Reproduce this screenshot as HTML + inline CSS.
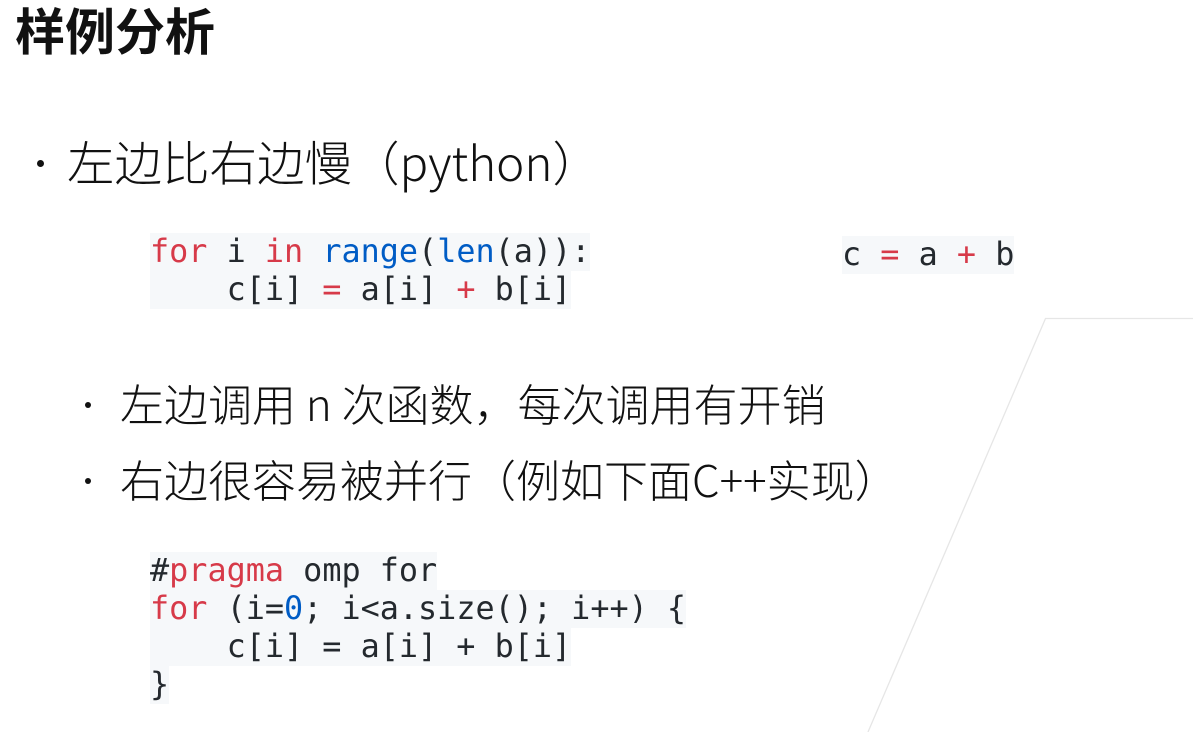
<!DOCTYPE html>
<html><head><meta charset="utf-8"><style>
body{margin:0;width:1193px;height:732px;background:#fff;position:relative;overflow:hidden;font-family:"Noto Sans CJK SC","Liberation Sans",sans-serif;color:#111}
.a{position:absolute;white-space:pre}
.t{left:15px;top:-4px;font-size:50px;font-weight:bold;line-height:66px}
.b1{left:67px;top:130px;font-size:47.5px;line-height:62px;font-weight:300}
.b2{font-size:44px;line-height:56px;left:120px;font-weight:300}
.dot{position:absolute;width:7px;height:7px;border-radius:50%;background:#111}
.code{font-family:"DejaVu Sans Mono",monospace;font-size:31.8px;line-height:38px;color:#24292e}
.code span.l{background:#f6f8fa;display:inline-block}
.k{color:#d73a49}.f{color:#005cc5}
</style></head><body>
<div class="a t">样例分析</div>
<div class="dot" style="left:37px;top:160px"></div>
<div class="a b1">左边比右边慢（python）</div>
<div class="a code" style="left:150px;top:233px"><span class="l"><span class="k">for</span> i <span class="k">in</span> <span class="f">range</span>(<span class="f">len</span>(a)):</span>
<span class="l">    c[i] <span class="k">=</span> a[i] <span class="k">+</span> b[i]</span></div>
<div class="a code" style="left:842px;top:236px"><span class="l">c <span class="k">=</span> a <span class="k">+</span> b</span></div>
<svg class="a" style="left:0;top:0" width="1193" height="732"><path d="M1193 318.5H1045.5L868 732" fill="none" stroke="#e6e6e6" stroke-width="1.3"/></svg>
<div class="dot" style="left:85px;top:402px;width:6px;height:6px"></div>
<div class="a b2" style="top:374px">左边调用 n 次函数，每次调用有开销</div>
<div class="dot" style="left:85px;top:478px;width:6px;height:6px"></div>
<div class="a b2" style="top:450px">右边很容易被并行（例如下面C++实现）</div>
<div class="a code" style="left:150px;top:552px"><span class="l">#<span class="k">pragma</span> omp for</span>
<span class="l"><span class="k">for</span> (i=<span class="f">0</span>; i&lt;a.size(); i++) {</span>
<span class="l">    c[i] = a[i] + b[i]</span>
<span class="l">}</span></div>
</body></html>
